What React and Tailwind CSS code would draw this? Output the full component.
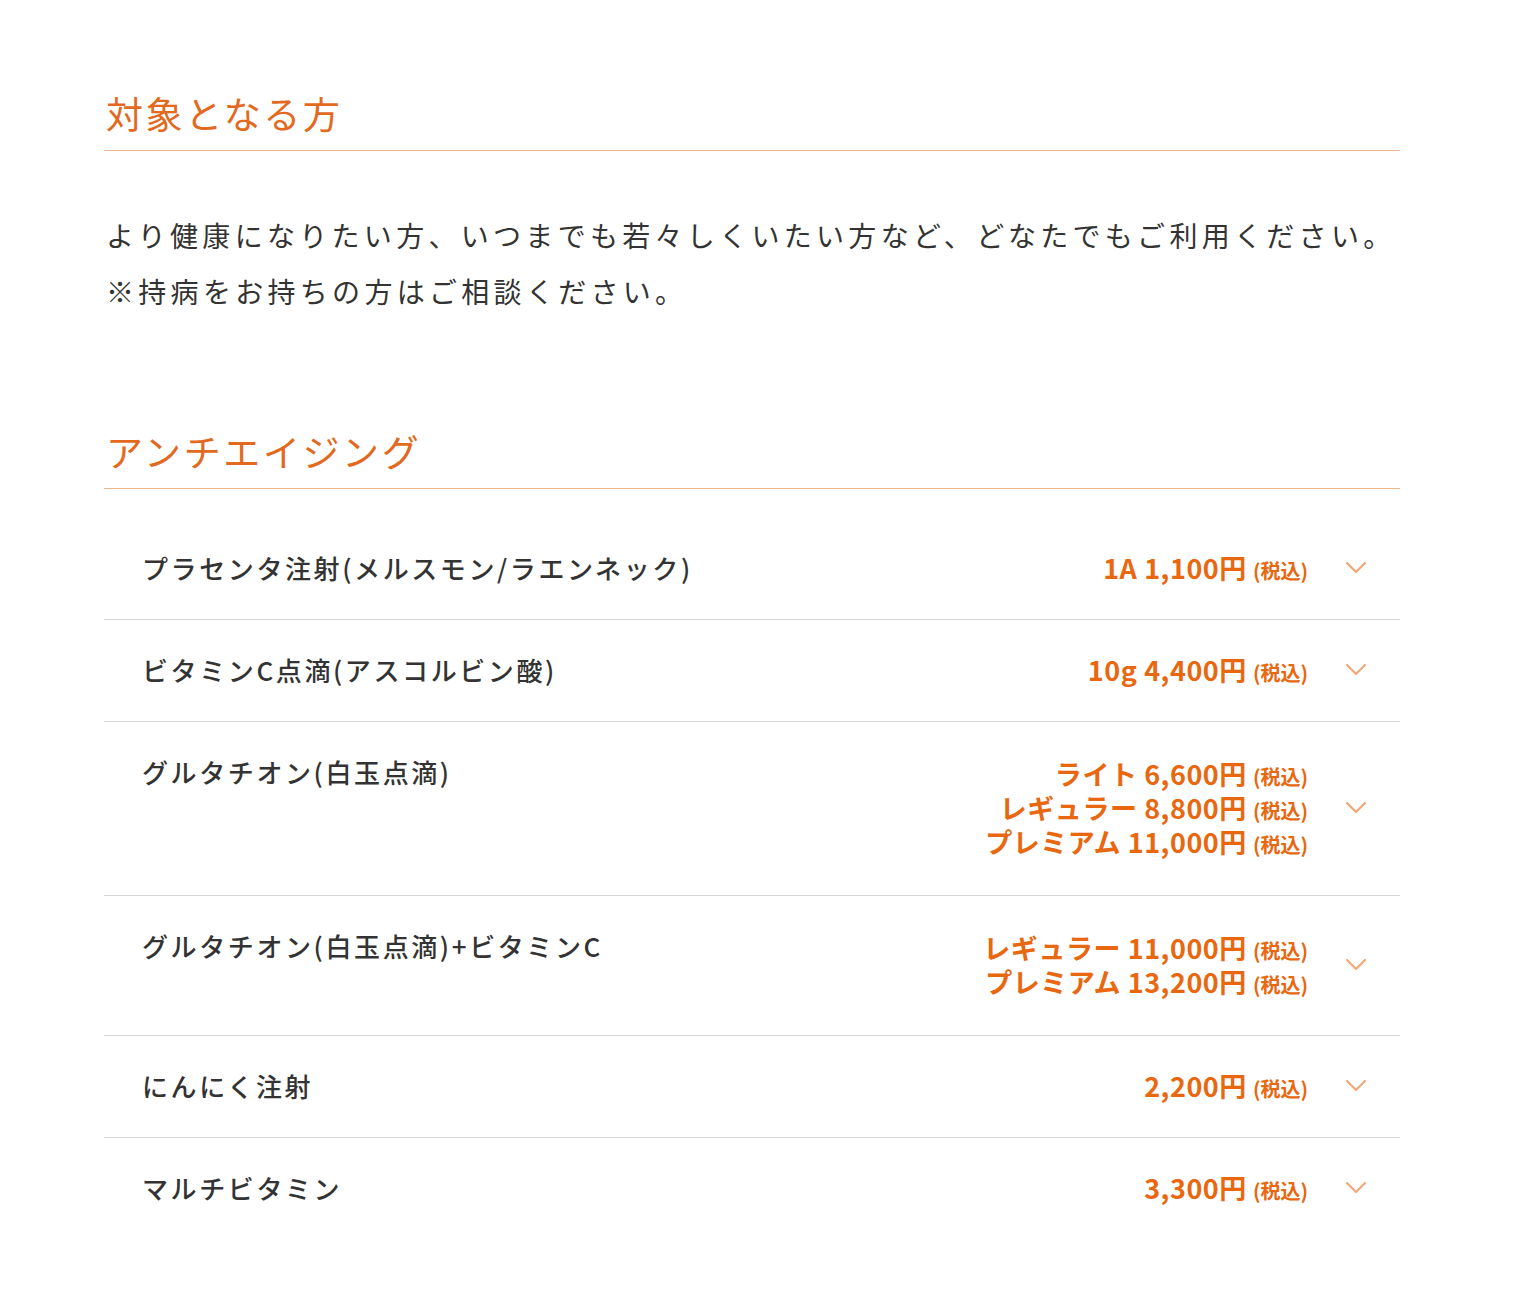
import React from "react";

const rows = [
  { name: "プラセンタ注射(メルスモン/ラエンネック)", prices: ["1A 1,100円"] },
  { name: "ビタミンC点滴(アスコルビン酸)", prices: ["10g 4,400円"] },
  {
    name: "グルタチオン(白玉点滴)",
    prices: ["ライト 6,600円", "レギュラー 8,800円", "プレミアム 11,000円"],
  },
  {
    name: "グルタチオン(白玉点滴)+ビタミンC",
    prices: ["レギュラー 11,000円", "プレミアム 13,200円"],
  },
  { name: "にんにく注射", prices: ["2,200円"] },
  { name: "マルチビタミン", prices: ["3,300円"] },
];

function Chevron() {
  return (
    <svg width="22" height="14" viewBox="0 0 22 14" fill="none">
      <path d="M2 2 L11 11 L20 2" stroke="#f6a777" strokeWidth="2.2" strokeLinecap="round" strokeLinejoin="round" />
    </svg>
  );
}

function Heading({ children, className = "" }) {
  return (
    <div className={`pb-[9px] border-b border-[#f1b890] ${className}`}>
      <h2 className="text-[37px] leading-[56px] tracking-[0.07em] text-[#e2691d] font-normal pl-[2px]">
        {children}
      </h2>
    </div>
  );
}

export default function App() {
  return (
    <div
      className="w-[1515px] min-h-[1299px] bg-white pt-[85px]"
      style={{ fontFamily: '"Noto Sans CJK JP", "Noto Sans", sans-serif' }}
    >
      <div className="ml-[104px] w-[1296px]">
        <Heading>対象となる方</Heading>
        <p className="mt-[56px] text-[28px] leading-[56px] tracking-[4.3px] text-[#333] pl-[2px] whitespace-nowrap">
          より健康になりたい方、いつまでも若々しくいたい方など、どなたでもご利用ください。
          <br />
          ※持病をお持ちの方はご相談ください。
        </p>
        <Heading className="mt-[104px]">アンチエイジング</Heading>
        <div className="mt-[29px]">
          {rows.map((r, i) => (
            <div
              key={i}
              className={`flex items-start pt-[33px] pb-[34px] ${i < rows.length - 1 ? "border-b border-[#d8d8d8]" : ""}`}
            >
              <div className="flex-1 pl-[38px] text-[26px] leading-[34px] font-medium tracking-[0.1em] text-[#333]">
                {r.name}
              </div>
              <div className={`flex flex-col items-end ${r.prices.length > 1 ? "mt-[2px] mb-[2px]" : ""}`}>
                {r.prices.map((p, j) => (
                  <div
                    key={j}
                    className="h-[34px] flex items-baseline text-[#e8670f] font-bold whitespace-nowrap"
                  >
                    <span className="text-[27px] leading-[34px] tracking-[0.02em]">{p}</span>
                    <span className="text-[20px] leading-[34px] ml-[6px]">(税込)</span>
                  </div>
                ))}
              </div>
              <div className="w-[92px] self-stretch flex items-center justify-center pl-[4px]">
                <Chevron />
              </div>
            </div>
          ))}
        </div>
      </div>
    </div>
  );
}
